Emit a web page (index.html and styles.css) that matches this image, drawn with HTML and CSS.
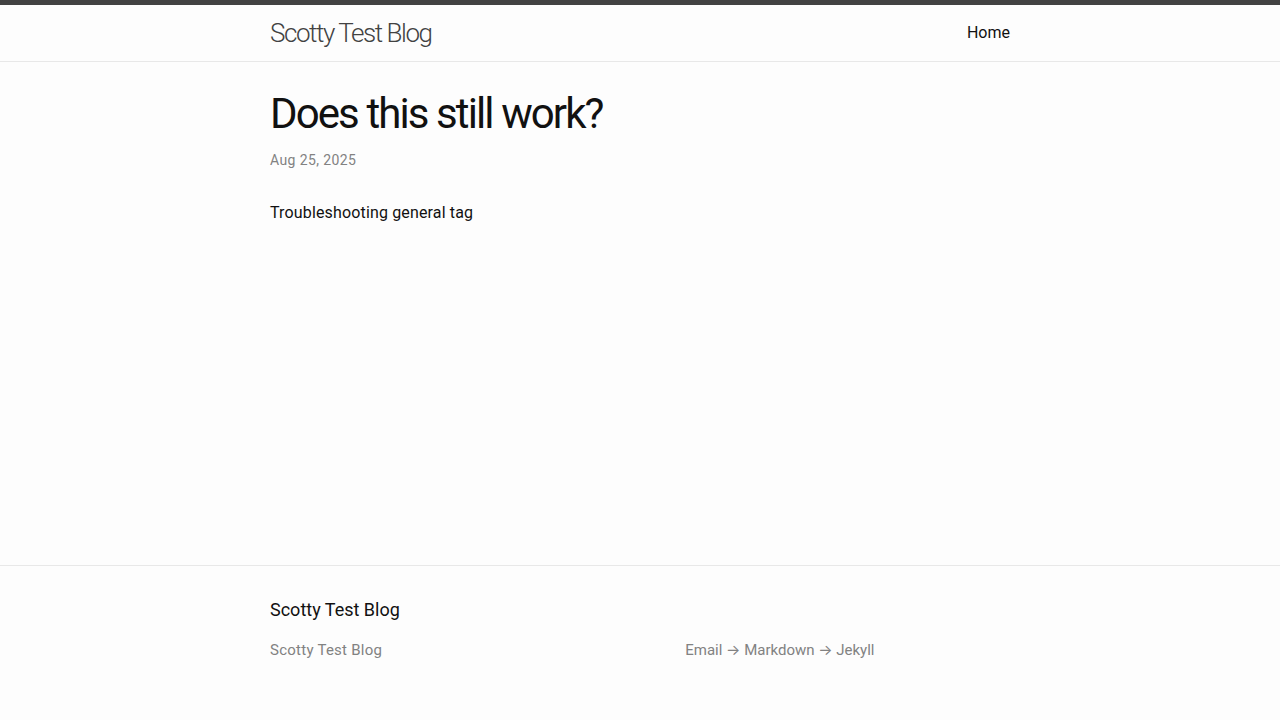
FILE: index.html
```html
<!DOCTYPE html>
<html lang="en">
<head>
<meta charset="utf-8">
<title>Does this still work? | Scotty Test Blog</title>
<link rel="stylesheet" href="styles.css">
</head>
<body>
<header class="site-header">
  <div class="wrapper header-inner">
    <a class="site-title" href="#">Scotty Test Blog</a>
    <nav class="site-nav">
      <a class="page-link" href="#">Home</a>
    </nav>
  </div>
</header>
<main class="page-content">
  <div class="wrapper">
    <article class="post">
      <header class="post-header">
        <h1 class="post-title">Does this still work?</h1>
        <p class="post-meta">Aug 25, 2025</p>
      </header>
      <div class="post-content">
        <p>Troubleshooting general tag</p>
      </div>
    </article>
  </div>
</main>
<footer class="site-footer">
  <div class="wrapper">
    <h2 class="footer-heading">Scotty Test Blog</h2>
    <div class="footer-col-wrapper">
      <div class="footer-col footer-col-1">
        <ul class="contact-list"><li>Scotty Test Blog</li></ul>
      </div>
      <div class="footer-col footer-col-2"></div>
      <div class="footer-col footer-col-3">
        <p>Email → Markdown → Jekyll</p>
      </div>
    </div>
  </div>
</footer>
</body>
</html>
```
FILE: styles.css
```css
* { box-sizing: border-box; }
html, body { margin: 0; padding: 0; }
body {
  font-family: Roboto, Inter, "Noto Sans", "Liberation Sans", sans-serif;
  font-size: 16px;
  line-height: 1.5;
  color: #111;
  background: #fdfdfd;
  min-height: 100vh;
  display: flex;
  flex-direction: column;
}
a { text-decoration: none; }
.wrapper {
  max-width: 800px;
  margin: 0 auto;
  padding: 0 30px;
  width: 800px;
}
.site-header {
  border-top: 5px solid #424242;
  border-bottom: 1px solid #e8e8e8;
  min-height: 56px;
}
.header-inner {
  display: flex;
  justify-content: space-between;
  align-items: flex-start;
}
.site-title {
  font-size: 26px;
  font-weight: 300;
  line-height: 56px;
  letter-spacing: -1.45px;
  color: #424242;
}
.page-link {
  color: #111;
  line-height: 56px;
  font-size: 16px;
}
.page-content {
  flex: 1;
  padding: 31px 0 30px;
}
.post-title {
  font-size: 42px;
  font-weight: 400;
  letter-spacing: -1.9px;
  line-height: 1;
  margin: 0 0 15px;
}
.post-meta {
  font-size: 14px;
  color: #828282;
  margin: 0;
  line-height: 21px;
  letter-spacing: 0.4px;
}
.post-header { margin-bottom: 30px; }
.post-content p { margin: 0 0 15px; letter-spacing: 0.15px; }
.site-footer {
  border-top: 1px solid #e8e8e8;
  padding: 30px 0;
}
.footer-heading {
  font-size: 18px;
  font-weight: 400;
  line-height: 27px;
  margin: 0 0 16px;
}
.footer-col-wrapper {
  display: flex;
  font-size: 15px;
  color: #828282;
  margin-left: -15px;
  line-height: 22.5px;
}
.footer-col { padding-left: 15px; margin-bottom: 14px; }
.footer-col-1 { width: 35%; flex: none; }
.footer-col-2 { width: 20%; flex: none; }
.footer-col-3 { width: 45%; flex: none; }
.contact-list { list-style: none; margin: 0 0 15px; padding: 0; letter-spacing: 0.25px; }
.footer-col-3 p { margin: 0 0 15px; }
```
